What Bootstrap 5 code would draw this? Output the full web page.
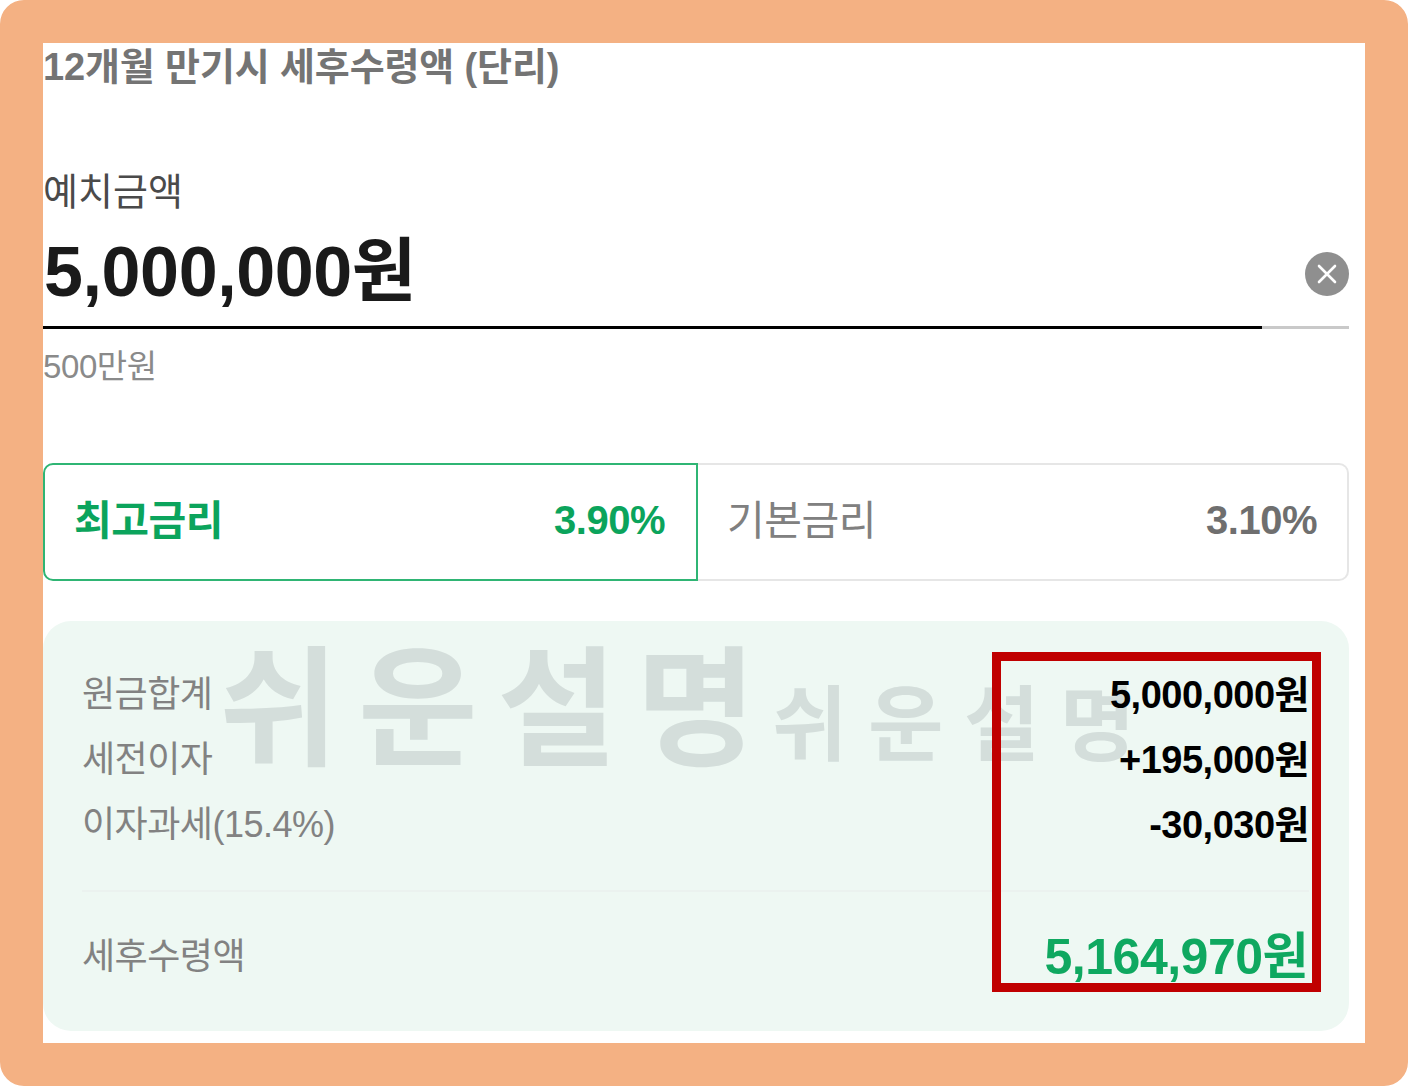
<!DOCTYPE html>
<html lang="ko">
<head>
<meta charset="utf-8">
<title>세후수령액</title>
<link href="https://cdn.jsdelivr.net/npm/bootstrap@5.3.0/dist/css/bootstrap.min.css" rel="stylesheet">
<style>
html,body{height:100%;margin:0;background:#fff}
body{font-family:"Liberation Sans","Noto Sans CJK KR",sans-serif;letter-spacing:-.5px}
.frame{width:1408px;height:1086px;border:43px solid #f4b183;border-radius:24px;background:#fff;padding-right:16px;overflow:hidden}
.ttl{font-size:38px;line-height:48px;font-weight:700;color:#747474;height:48px;margin:0;letter-spacing:-.13px}
.lbl{font-size:38px;line-height:50px;color:#4a4a4a;margin-top:76px;letter-spacing:0}
.amt-row{height:109px;margin-top:0}
.amt{font-size:70px;font-weight:700;color:#1a1a1a;line-height:86px;letter-spacing:-.4px;padding-left:1px}
.clear-x{width:44px;height:44px;border-radius:50%;background:#8f8f8f;flex:none;margin-top:4px}
.track{height:3px;background:#c9c9c9;margin-top:0}
.track-on{width:1219px;height:3px;background:#000}
.hint{font-size:33px;line-height:40px;color:#8a8a8a;margin-top:18px;letter-spacing:-.4px}
.rates{margin-top:76px;height:118px}
.rate{padding:0 30px 0 29px;display:flex;align-items:center;justify-content:space-between;font-size:41px;background:#fff}
.rate-on{flex:0 0 655px;border:2px solid #2fb574;border-radius:10px 0 0 10px;color:#0ba45c;font-weight:700;padding-right:31px}
.rate-off{flex:1 1 0;border:2px solid #e6e6e6;border-left:0;border-radius:0 10px 10px 0;color:#808080}
.rate-off b{font-weight:700;color:#6f6f6f}
.rate>:last-child{font-size:40px;margin-top:-4px}
.panel{position:relative;height:410px;margin-top:40px;background:#eef8f3;border-radius:28px;padding:42px 40px 0 39px}
.line{display:flex;justify-content:space-between;height:65px;line-height:64px;font-size:36px;color:#828282;position:relative}
.line b{color:#000;font-size:38px}
.sep{height:2px;background:#ebf2ef;margin-top:32px;position:relative}
.total{display:flex;justify-content:space-between;align-items:center;margin-top:30px;font-size:36px;color:#828282;position:relative;height:70px}
.total b{font-size:50px;color:#0fa860;margin-right:1px}
.wm{position:absolute;white-space:nowrap;color:#d4dedb;font-weight:700}
.wm1{left:176px;top:14px;font-size:130px;line-height:150px;letter-spacing:19.5px}
.wm2{left:729px;top:55px;font-size:82px;line-height:100px;letter-spacing:20.5px}
.hl{position:absolute;left:949px;top:31px;width:329px;height:340px;border:9px solid #c00000}
</style>
</head>
<body>
<div class="frame">
  <h1 class="ttl">12개월 만기시 세후수령액 (단리)</h1>
  <div class="lbl">예치금액</div>
  <div class="amt-row d-flex justify-content-between align-items-center">
    <span class="amt">5,000,000원</span>
    <span class="clear-x d-flex align-items-center justify-content-center">
      <svg width="22" height="22" viewBox="0 0 22 22"><path d="M3 3L19 19M19 3L3 19" stroke="#fff" stroke-width="2.6" stroke-linecap="round"/></svg>
    </span>
  </div>
  <div class="track"><div class="track-on"></div></div>
  <div class="hint">500만원</div>
  <div class="rates d-flex">
    <div class="rate rate-on"><span>최고금리</span><span>3.90%</span></div>
    <div class="rate rate-off"><span>기본금리</span><b>3.10%</b></div>
  </div>
  <div class="panel">
    <div class="wm wm1">쉬운설명</div>
    <div class="wm wm2">쉬운설명</div>
    <div class="line"><span>원금합계</span><b>5,000,000원</b></div>
    <div class="line"><span>세전이자</span><b>+195,000원</b></div>
    <div class="line"><span>이자과세(15.4%)</span><b>-30,030원</b></div>
    <div class="sep"></div>
    <div class="total"><span>세후수령액</span><b>5,164,970원</b></div>
    <div class="hl"></div>
  </div>
</div>
<script src="https://cdn.jsdelivr.net/npm/bootstrap@5.3.0/dist/js/bootstrap.bundle.min.js"></script>
</body>
</html>
